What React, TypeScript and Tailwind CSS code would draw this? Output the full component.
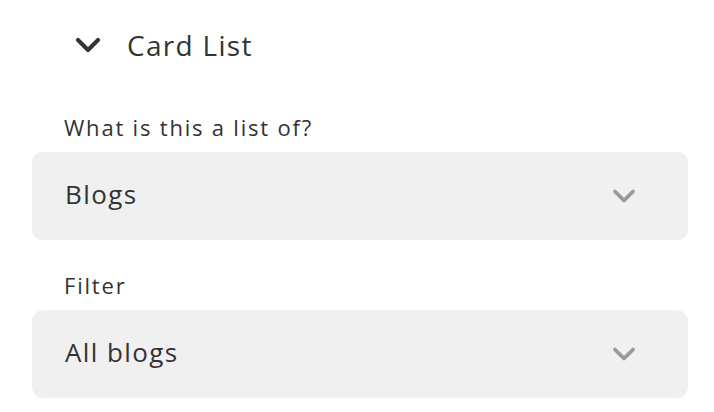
import { ChevronDown } from "lucide-react";

function SelectField({ label, value }: { label: string; value: string }) {
  return (
    <div className="flex flex-col">
      <label className="pl-8 text-[22px] leading-[30px] tracking-[1.8px] text-[#333]">{label}</label>
      <div className="mt-[10px] flex h-[88px] items-center justify-between rounded-[11px] bg-[#f0f0f0] pl-[33px] pr-[46px]">
        <span className="mb-[3px] text-[26px] tracking-[1.4px] text-[#333]">{value}</span>
        <ChevronDown className="h-[36px] w-[36px] text-[#999]" strokeWidth={2.5} />
      </div>
    </div>
  );
}

export default function App() {
  return (
    <div className="h-[412px] w-[714px] overflow-hidden bg-white pl-8 pr-[26px] pt-[25px] font-['Open_Sans',sans-serif]">
      <div className="flex h-[40px] items-center pl-[36px]">
        <ChevronDown className="h-[40px] w-[40px] text-[#333]" strokeWidth={2.5} />
        <span className="ml-[19px] text-[28px] leading-[38px] tracking-[1.3px] text-[#333]">Card List</span>
      </div>
      <div className="mt-[47px] flex flex-col gap-[30px]">
        <SelectField label="What is this a list of?" value="Blogs" />
        <SelectField label="Filter" value="All blogs" />
      </div>
    </div>
  );
}
